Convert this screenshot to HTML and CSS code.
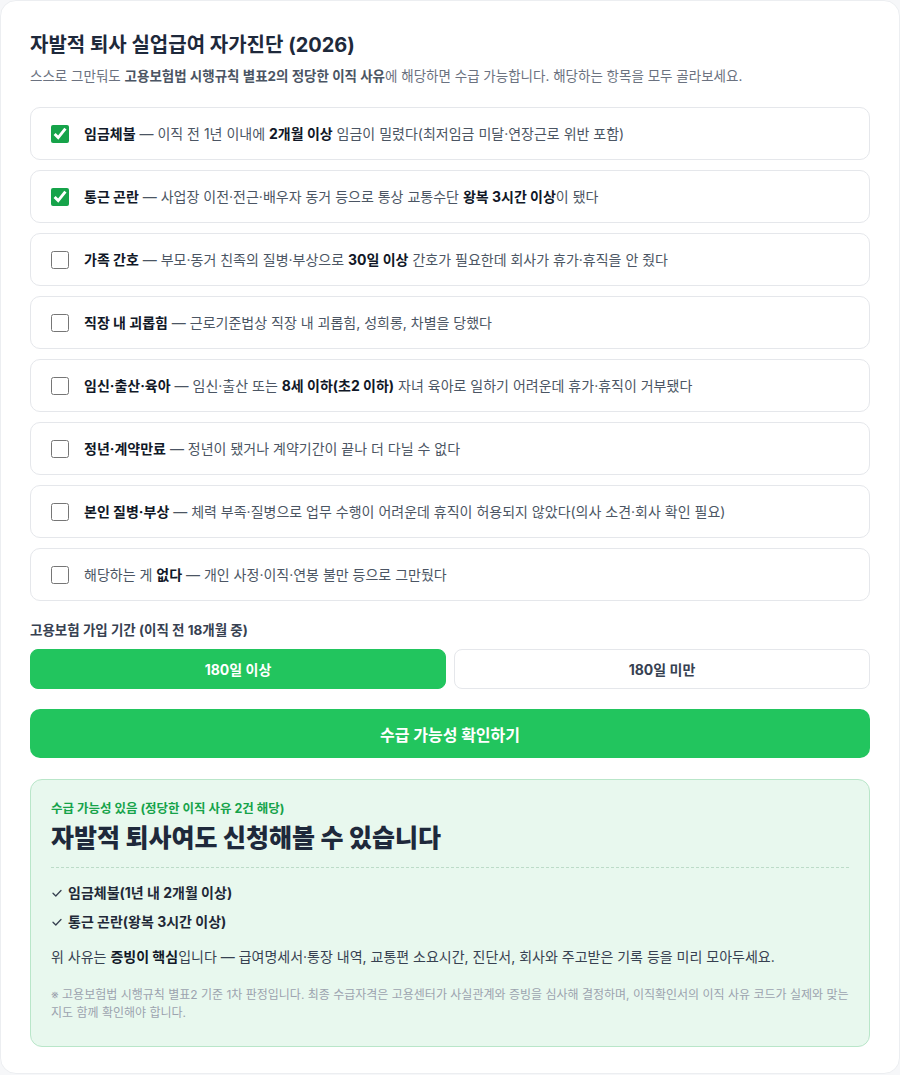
FILE: index.html
```html
<!DOCTYPE html>
<html lang="ko">
<head>
    <meta charset="UTF-8">
    <meta name="viewport" content="width=device-width, initial-scale=1.0">
    <title>자발적 퇴사 실업급여 자가진단</title>
    <link rel="stylesheet" href="styles.css">
</head>
<body>
    <div class="card">
        <h1 class="title">자발적 퇴사 실업급여 자가진단 (2026)</h1>
        <p class="intro">스스로 그만둬도 <b>고용보험법 시행규칙 별표2의 정당한 이직 사유</b>에 해당하면 수급 가능합니다. 해당하는 항목을 모두 골라보세요.</p>

        <div class="reasons">
            <label class="reason"><input type="checkbox" checked> <span><b>임금체불</b> — 이직 전 1년 이내에 <b>2개월 이상</b> 임금이 밀렸다(최저임금 미달·연장근로 위반 포함)</span></label>
            <label class="reason"><input type="checkbox" checked> <span><b>통근 곤란</b> — 사업장 이전·전근·배우자 동거 등으로 통상 교통수단 <b>왕복 3시간 이상</b>이 됐다</span></label>
            <label class="reason"><input type="checkbox"> <span><b>가족 간호</b> — 부모·동거 친족의 질병·부상으로 <b>30일 이상</b> 간호가 필요한데 회사가 휴가·휴직을 안 줬다</span></label>
            <label class="reason"><input type="checkbox"> <span><b>직장 내 괴롭힘</b> — 근로기준법상 직장 내 괴롭힘, 성희롱, 차별을 당했다</span></label>
            <label class="reason"><input type="checkbox"> <span><b>임신·출산·육아</b> — 임신·출산 또는 <b>8세 이하(초2 이하)</b> 자녀 육아로 일하기 어려운데 휴가·휴직이 거부됐다</span></label>
            <label class="reason"><input type="checkbox"> <span><b>정년·계약만료</b> — 정년이 됐거나 계약기간이 끝나 더 다닐 수 없다</span></label>
            <label class="reason"><input type="checkbox"> <span><b>본인 질병·부상</b> — 체력 부족·질병으로 업무 수행이 어려운데 휴직이 허용되지 않았다(의사 소견·회사 확인 필요)</span></label>
            <label class="reason"><input type="checkbox"> <span>해당하는 게 <b>없다</b> — 개인 사정·이직·연봉 불만 등으로 그만뒀다</span></label>
        </div>

        <div class="period-label">고용보험 가입 기간 (이직 전 18개월 중)</div>
        <div class="period">
            <button type="button" class="period-btn active">180일 이상</button>
            <button type="button" class="period-btn">180일 미만</button>
        </div>

        <button type="button" class="check-btn">수급 가능성 확인하기</button>

        <div class="result">
            <div class="result-tag">수급 가능성 있음 (정당한 이직 사유 2건 해당)</div>
            <h2 class="result-title">자발적 퇴사여도 신청해볼 수 있습니다</h2>
            <ul class="result-list">
                <li><svg width="12" height="12" viewBox="0 0 12 12"><path d="M2 6.2 L4.8 9 L10 3.5" fill="none" stroke="#374151" stroke-width="1.3" stroke-linecap="round" stroke-linejoin="round"/></svg>임금체불(1년 내 2개월 이상)</li>
                <li><svg width="12" height="12" viewBox="0 0 12 12"><path d="M2 6.2 L4.8 9 L10 3.5" fill="none" stroke="#374151" stroke-width="1.3" stroke-linecap="round" stroke-linejoin="round"/></svg>통근 곤란(왕복 3시간 이상)</li>
            </ul>
            <p class="result-text">위 사유는 <b>증빙이 핵심</b>입니다 — 급여명세서·통장 내역, 교통편 소요시간, 진단서, 회사와 주고받은 기록 등을 미리 모아두세요.</p>
            <p class="result-note">※ 고용보험법 시행규칙 별표2 기준 1차 판정입니다. 최종 수급자격은 고용센터가 사실관계와 증빙을 심사해 결정하며, 이직확인서의 이직 사유 코드가 실제와 맞는지도 함께 확인해야 합니다.</p>
        </div>
    </div>
</body>
</html>
```

FILE: styles.css
```css
body {
    margin: 0;
    padding: 0;
    background-color: #f6f7f9;
    font-family: Inter, "Noto Sans CJK KR", sans-serif;
    color: #374151;
}

.card {
    box-sizing: border-box;
    background-color: #fff;
    border: 1px solid #eceef1;
    border-radius: 16px;
    padding: 30px 29px 26px;
}

.title {
    margin: 0;
    font-size: 20px;
    line-height: 28px;
    font-weight: 700;
    color: #1e293b;
}

.intro {
    margin: 7px 0 0;
    font-size: 13.5px;
    line-height: 20px;
    color: #6b7280;
}

.intro b {
    color: #4b5563;
}

.reasons {
    display: flex;
    flex-direction: column;
    gap: 10px;
    margin-top: 21px;
}

.reason {
    display: flex;
    align-items: center;
    gap: 15px;
    padding: 15px 20px;
    border: 1px solid #e5e7eb;
    border-radius: 10px;
    font-size: 14px;
    line-height: 21px;
    color: #4b5563;
    cursor: pointer;
}

.reason b {
    color: #111827;
}

.reason input {
    width: 18px;
    height: 18px;
    margin: 0;
    flex-shrink: 0;
    accent-color: #16a34a;
}

.period-label {
    margin-top: 19px;
    font-size: 13.5px;
    line-height: 20px;
    font-weight: 700;
    color: #374151;
}

.period {
    display: flex;
    gap: 8px;
    margin-top: 9px;
}

.period-btn {
    flex: 1;
    height: 40px;
    border: 1px solid #e5e7eb;
    border-radius: 8px;
    background-color: #fff;
    font-family: inherit;
    font-size: 14px;
    font-weight: 700;
    color: #374151;
    cursor: pointer;
}

.period-btn.active {
    background-color: #22c55e;
    border-color: #22c55e;
    color: #fff;
}

.check-btn {
    display: block;
    width: 100%;
    height: 49px;
    margin-top: 20px;
    border: none;
    border-radius: 10px;
    background-color: #22c55e;
    font-family: inherit;
    font-size: 16px;
    font-weight: 700;
    color: #fff;
    cursor: pointer;
}

.result {
    margin-top: 21px;
    padding: 20px 20px 24px;
    background-color: #e8f8ee;
    border: 1px solid #b9e6c9;
    border-radius: 12px;
}

.result-tag {
    font-size: 12.5px;
    line-height: 18px;
    font-weight: 700;
    color: #16a34a;
}

.result-title {
    margin: 4px 0 0;
    font-size: 25px;
    line-height: 32px;
    font-weight: 800;
    color: #1e293b;
}

.result-list {
    list-style-type: none;
    margin: 13px 0 0;
    padding: 14px 0 0;
    border-top: 1px dashed #bcdcc8;
    display: flex;
    flex-direction: column;
    gap: 7px;
}

.result-list li {
    display: flex;
    align-items: center;
    gap: 5px;
    font-size: 14px;
    line-height: 22px;
    font-weight: 700;
    color: #1f2937;
}

.result-text {
    margin: 13px 0 0;
    font-size: 14px;
    line-height: 22px;
    color: #374151;
}

.result-text b {
    color: #111827;
}

.result-note {
    margin: 18px 0 0;
    font-size: 12px;
    line-height: 18px;
    color: #9ca3af;
}
```
